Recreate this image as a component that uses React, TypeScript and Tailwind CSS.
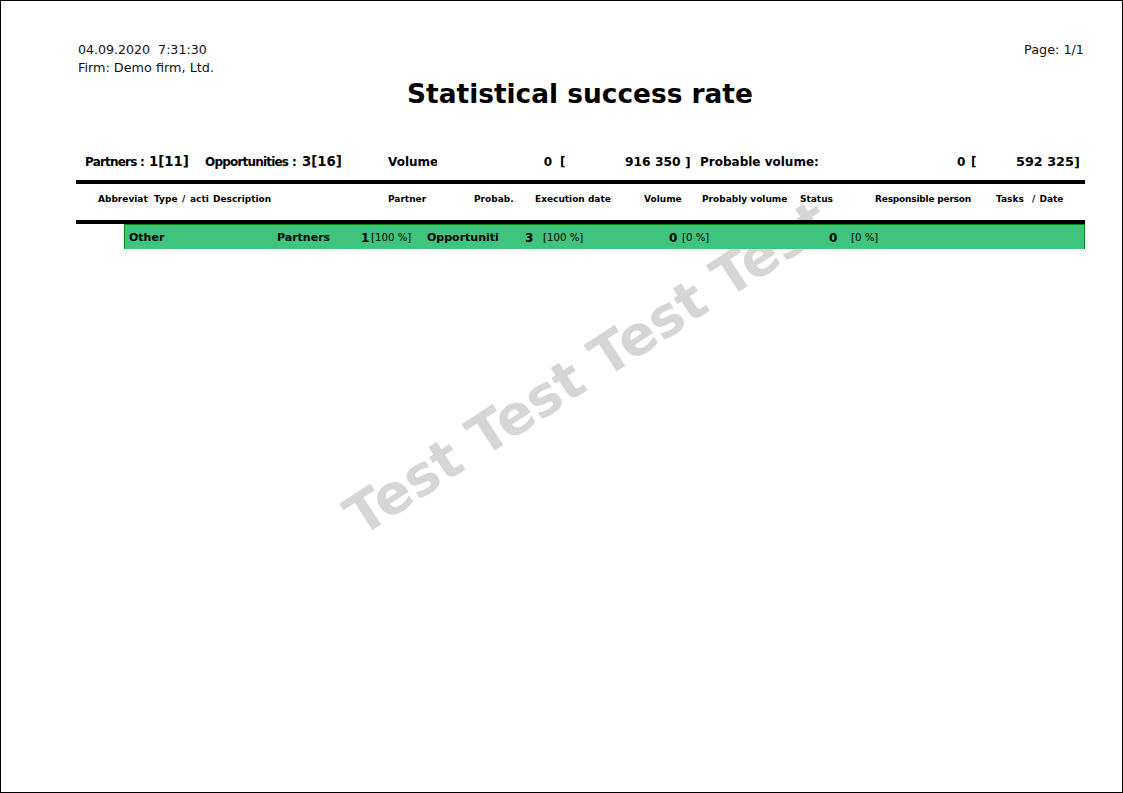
const font = "font-['DejaVu_Sans',sans-serif]";

export default function App() {
  return (
    <div className={`relative h-[793px] w-[1123px] overflow-hidden border border-black bg-white text-black ${font}`}>
      {/* Watermark */}
      <div className="absolute left-[236px] top-[334px] w-[700px] -rotate-[33deg] whitespace-nowrap text-center text-[55px] leading-[66px] font-bold text-[#d6d6d6]">
        Test Test Test Test
      </div>

      <div className="relative flex flex-col pl-[75px] pr-[37px] pt-[40px]">
        {/* Page header */}
        <div className="flex h-[18px] items-center justify-between pl-[2px] pr-[1px] text-[12.8px] leading-[18px] text-[#111]">
          <span className="whitespace-pre text-[12.6px]">04.09.2020  7:31:30</span>
          <span>Page: 1/1</span>
        </div>
        <div className="h-[18px] pl-[2px] text-[12.8px] leading-[18px] text-[#111]">Firm: Demo firm, Ltd.</div>
        <h1 className="ml-[-1px] mt-[-5px] h-[44px] text-center text-[26.4px] leading-[44px] font-bold">
          Statistical success rate
        </h1>

        {/* Totals */}
        <div className="mb-[2px] mt-[30px] flex h-[32px] items-center whitespace-nowrap text-xs font-bold">
          <span className="ml-[9px] w-[55px] tracking-[-0.8px]">Partners</span>
          <span className="w-[9px]">:</span>
          <span className="w-[56px] text-[13.3px]">1[11]</span>
          <span className="w-[87px] tracking-[-0.8px]">Opportunities</span>
          <span className="w-[10px]">:</span>
          <span className="w-[86px] text-[13.3px]">3[16]</span>
          <span className="w-[49px] overflow-hidden">Volume</span>
          <span className="w-[115px] text-right">0</span>
          <span className="ml-[8px] w-[65px]">[</span>
          <span className="w-[66px] whitespace-pre text-[12.3px]">916 350 ]</span>
          <span className="ml-[9px] w-[257px]">Probable volume:</span>
          <span className="w-[14px]">0</span>
          <span className="w-[45px]">[</span>
          <span className="text-[12.8px]">592 325]</span>
        </div>
        <div className="h-[4px] bg-black" />

        {/* Column titles */}
        <div className="flex h-[36px] whitespace-nowrap pl-[22px] pt-[5px] text-[9px] leading-[20px] font-bold">
          <span className="w-[56px]">Abbreviat</span>
          <span className="w-[59px] [word-spacing:1.5px]">Type / acti</span>
          <span className="w-[175px]">Description</span>
          <span className="w-[86px]">Partner</span>
          <span className="w-[61px]">Probab.</span>
          <span className="w-[109px]">Execution date</span>
          <span className="w-[58px]">Volume</span>
          <span className="w-[98px]">Probably volume</span>
          <span className="w-[75px]">Status</span>
          <span className="w-[121px] tracking-[-0.2px]">Responsible person</span>
          <span className="whitespace-pre [word-spacing:1px]">Tasks  / Date</span>
        </div>
        <div className="h-[4px] bg-black" />

        {/* Group row */}
        <div className="ml-[48px] flex h-[25px] items-center whitespace-nowrap border-x border-t border-[#0b8a12] bg-[#3ec47c] pl-[4px] pt-[1px] text-[11px] leading-[20px] font-bold">
          <span className="w-[148px]">Other</span>
          <span className="w-[84px]">Partners</span>
          <span className="w-[10px] text-xs">1</span>
          <span className="w-[56px] text-[10.2px] font-normal">[100 %]</span>
          <span className="w-[98px]">Opportuniti</span>
          <span className="w-[18px] text-xs">3</span>
          <span className="w-[126px] text-[10.2px] font-normal">[100 %]</span>
          <span className="w-[13px] text-xs">0</span>
          <span className="w-[147px] text-[10.2px] font-normal">[0 %]</span>
          <span className="w-[22px] text-xs">0</span>
          <span className="text-[10.2px] font-normal">[0 %]</span>
        </div>
      </div>
    </div>
  );
}
